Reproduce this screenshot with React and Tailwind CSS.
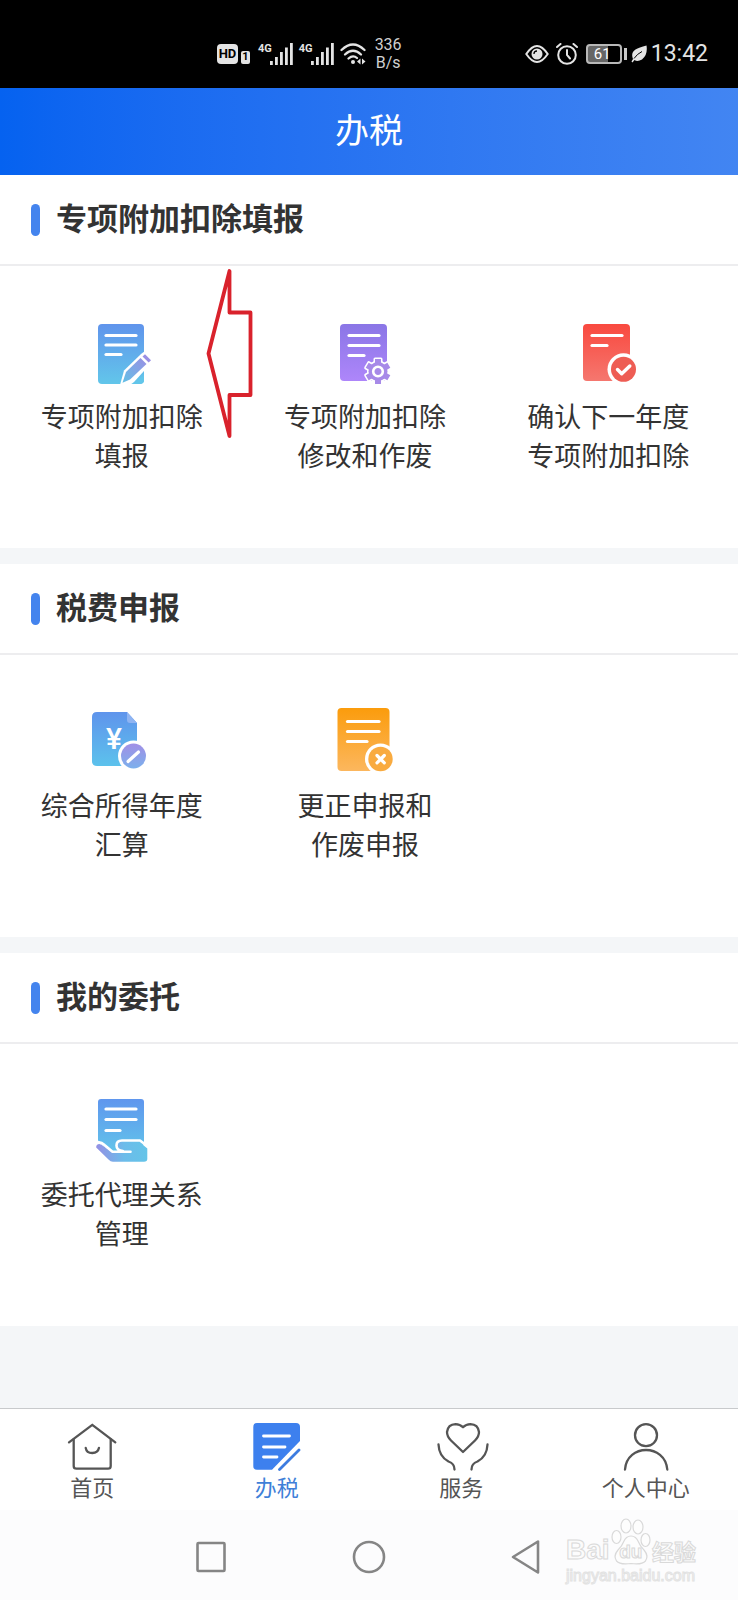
import React, { useState } from 'react';

const DocLines = ({ x = 19, ys, short = 36 }) => (
  <g stroke="#fff" strokeWidth="3.2" strokeLinecap="round">
    {ys.map((y, i) => (
      <line key={y} x1={x + 1} x2={i === ys.length - 1 ? short - 1 : 50} y1={y} y2={y} />
    ))}
  </g>
);

const EditDocIcon = () => (
  <svg viewBox="0 0 72 72" className="h-[72px] w-[72px]" aria-hidden="true">
    <defs>
      <linearGradient id="editDoc" x1="0" y1="0" x2="0" y2="1">
        <stop offset="0" stopColor="#6094ec" />
        <stop offset="1" stopColor="#62c6ea" />
      </linearGradient>
      <linearGradient id="editPen" x1="1" y1="0" x2="0" y2="1">
        <stop offset="0" stopColor="#9a8fe4" />
        <stop offset="1" stopColor="#62c0e6" />
      </linearGradient>
    </defs>
    <rect x="12" y="8" width="46" height="60" rx="4" fill="url(#editDoc)" />
    <DocLines ys={[19.5, 29, 38.5]} />
    <path d="M34 69 L38 54.500 L55 38 L59 35 L68 44 L48 66 L44 69 Z" fill="#fff" />
    <path d="M36.500 66.800 L40 56 L54.500 42 L60.500 48 L44 63.500 Z" fill="url(#editPen)" />
    <path d="M56.500 40.500 L59 38.300 L65 44.200 L62.700 46.600 Z" fill="#9a8fe4" />
    <path d="M48.500 67.800 L58 59 V64 Q58 67.800 54 67.800 Z" fill="#62c6ea" />
  </svg>
);

const GearDocIcon = () => (
  <svg viewBox="0 0 72 72" className="h-[72px] w-[72px]" aria-hidden="true">
    <defs>
      <linearGradient id="gearDoc" x1="0" y1="0" x2="0" y2="1">
        <stop offset="0" stopColor="#8a76e6" />
        <stop offset="1" stopColor="#ae86fa" />
      </linearGradient>
    </defs>
    <rect x="11" y="8" width="47" height="57" rx="4" fill="url(#gearDoc)" />
    <DocLines ys={[19.5, 29.5, 39.5]} />
    <g transform="translate(49 55.5)">
      <g fill="#a78ae8" stroke="#fff" strokeWidth="3" strokeLinejoin="round">
        <circle r="9.5" />
        {[0, 60, 120, 180, 240, 300].map((a) => (
          <rect key={a} x="-3" y="-12.5" width="6" height="6" transform={`rotate(${a})`} />
        ))}
      </g>
      <g fill="#a78ae8">
        <circle r="9.5" />
        {[0, 60, 120, 180, 240, 300].map((a) => (
          <rect key={a} x="-3" y="-12.5" width="6" height="6" transform={`rotate(${a})`} />
        ))}
      </g>
      <circle r="4.8" fill="none" stroke="#fff" strokeWidth="2.6" />
    </g>
  </svg>
);

const CheckDocIcon = () => (
  <svg viewBox="0 0 72 72" className="h-[72px] w-[72px]" aria-hidden="true">
    <defs>
      <linearGradient id="checkDoc" x1="0" y1="0" x2="0" y2="1">
        <stop offset="0" stopColor="#f9493f" />
        <stop offset="1" stopColor="#f5776f" />
      </linearGradient>
    </defs>
    <rect x="11" y="8" width="47" height="57" rx="4" fill="url(#checkDoc)" />
    <DocLines x={19} ys={[19.5, 29.5]} />
    <circle cx="51.5" cy="53.3" r="16" fill="#fff" />
    <circle cx="51.5" cy="53.3" r="12.5" fill="#ee5d54" />
    <path d="M45.5 53.5 L49.7 57.8 L57.8 50" fill="none" stroke="#fff" strokeWidth="3.4" strokeLinecap="round" strokeLinejoin="round" />
  </svg>
);

const YenDocIcon = () => (
  <svg viewBox="0 0 72 72" className="h-[72px] w-[72px]" aria-hidden="true">
    <defs>
      <linearGradient id="yenDoc" x1="0" y1="0" x2="0" y2="1">
        <stop offset="0" stopColor="#5f94ec" />
        <stop offset="1" stopColor="#5cc2ec" />
      </linearGradient>
      <linearGradient id="yenPen" x1="0" y1="0" x2="0" y2="1">
        <stop offset="0" stopColor="#a18fe6" />
        <stop offset="1" stopColor="#7cb0ec" />
      </linearGradient>
    </defs>
    <path d="M11 7 H41 L51 18 V61 H11 Q6 61 6 56 V12 Q6 7 11 7 Z" fill="url(#yenDoc)" />
    <path d="M41 7 L51 18 H44 Q41 18 41 15 Z" fill="#8fb4f2" />
    <text x="28" y="44" textAnchor="middle" fontSize="30" fontWeight="500" fill="#fff" fontFamily="Roboto, sans-serif">¥</text>
    <circle cx="47.5" cy="51" r="15.5" fill="#fff" />
    <circle cx="47.5" cy="51" r="12.5" fill="url(#yenPen)" />
    <path d="M42 56.5 L52.5 47" stroke="#fff" strokeWidth="3.2" strokeLinecap="round" />
  </svg>
);

const CancelDocIcon = () => (
  <svg viewBox="0 0 72 72" className="h-[72px] w-[72px]" aria-hidden="true">
    <defs>
      <linearGradient id="cancelDoc" x1="0" y1="0" x2="0" y2="1">
        <stop offset="0" stopColor="#fb9c0c" />
        <stop offset="1" stopColor="#fcb75e" />
      </linearGradient>
    </defs>
    <rect x="8.5" y="3" width="52" height="63" rx="4" fill="url(#cancelDoc)" />
    <DocLines x={17.5} ys={[16.5, 26.5, 36.5]} short={39} />
    <circle cx="51.5" cy="54" r="15.5" fill="#fff" />
    <circle cx="51.5" cy="54" r="12.2" fill="#f9ab40" />
    <path d="M48 50.5 L55.3 57.8 M55.3 50.5 L48 57.8" stroke="#fff" strokeWidth="3.2" strokeLinecap="round" />
  </svg>
);

const HandDocIcon = () => (
  <svg viewBox="0 0 72 72" className="h-[72px] w-[72px]" aria-hidden="true">
    <defs>
      <linearGradient id="handDoc" x1="0" y1="0" x2="0" y2="1">
        <stop offset="0" stopColor="#5f96ee" />
        <stop offset="1" stopColor="#62c4ea" />
      </linearGradient>
      <linearGradient id="handPalm" x1="0" y1="0" x2="1" y2="0">
        <stop offset="0" stopColor="#9490e4" />
        <stop offset="0.55" stopColor="#6cbcea" />
        <stop offset="1" stopColor="#64c4e8" />
      </linearGradient>
    </defs>
    <path d="M15 5 H55 Q58 5 58 8 V50 L45 58 H26 L12 48 V8 Q12 5 15 5 Z" fill="url(#handDoc)" />
    <DocLines ys={[15, 25.5, 36.5]} short={35} />
    <path
      d="M10.2 53.5 Q10 50 13.5 50 Q16 50.500 18 52.500 L26.500 58.500 H36 Q31 56 31 51.500 Q31 47.500 36 47.500 H53 L61.300 54.500 V65 Q61.300 67.700 58 67.700 H27 Q24.500 67.700 22.500 65.500 Z"
      fill="url(#handPalm)"
    />
    <path
      d="M12 48 Q16 48.5 18.5 51 L26.500 57.800 H44.500 M37 57 Q30.500 56.500 30.500 51.500 Q30.500 46.500 36 46.500 H54 L60 51"
      fill="none"
      stroke="#fff"
      strokeWidth="2.6"
      strokeLinecap="round"
      strokeLinejoin="round"
    />
  </svg>
);

const HomeIcon = () => (
  <svg viewBox="-2 0 56 48" className="h-12 w-14" fill="none" stroke="currentColor" strokeWidth="2.3" strokeLinecap="round" strokeLinejoin="round" aria-hidden="true">
    <path d="M3 19.3 L26.3 1.8 L49.3 19.3" />
    <path d="M7.7 16.5 V43 Q7.7 45.7 10.5 45.7 H42 Q44.7 45.7 44.7 43 V16.5" />
    <path d="M19.7 24.8 Q20.5 30 26.3 30 Q32 30 33 24.8" />
  </svg>
);

const TaxIcon = () => (
  <svg viewBox="-2 0 56 48" className="h-12 w-14" fill="none" strokeLinecap="round" aria-hidden="true">
    <path d="M6 0 H45 Q49 0 49 4 V18 L21 46.8 H6 Q2.3 46.8 2.3 43 V4 Q2.3 0 6 0 Z" fill="#3d80ee" />
    <path d="M48 27 L28.5 46.5" stroke="#3d7ce0" strokeWidth="2.8" />
    <path d="M12.500 13 H38.500 M12.500 24 H34 M12.500 34 H26" stroke="#fff" strokeWidth="2.8" />
  </svg>
);

const ServiceIcon = () => (
  <svg viewBox="-1 0 56 48" className="h-12 w-14 overflow-visible" fill="none" stroke="currentColor" strokeWidth="2.3" strokeLinecap="round" strokeLinejoin="round" aria-hidden="true">
    <path d="M29 29 L17 17.5 Q13 13.5 13 9 Q14 1.5 21.5 1.2 Q26 1.3 29 4.2 Q32 1.3 36.5 1.2 Q44 1.5 45 9 Q45 13.5 41 17.5 Z" />
    <path d="M4.5 21.5 Q5 33.5 14.5 38.500 Q20.5 40.5 20.5 46.5" />
    <path d="M53.5 21.5 Q53 33.5 43.5 38.5 Q37.5 40.5 37.5 46.5" />
  </svg>
);

const PersonIcon = () => (
  <svg viewBox="-2 0 56 48" className="h-12 w-14" fill="none" stroke="currentColor" strokeWidth="2.3" strokeLinecap="round" aria-hidden="true">
    <circle cx="26" cy="12.2" r="11" />
    <path d="M5 46.5 C7 20.5 45 20.5 47.3 46.5" />
  </svg>
);

const sections = [
  {
    title: '专项附加扣除填报',
    items: [
      { lines: ['专项附加扣除', '填报'], Icon: EditDocIcon },
      { lines: ['专项附加扣除', '修改和作废'], Icon: GearDocIcon },
      { lines: ['确认下一年度', '专项附加扣除'], Icon: CheckDocIcon },
    ],
    arrow: true,
  },
  {
    title: '税费申报',
    items: [
      { lines: ['综合所得年度', '汇算'], Icon: YenDocIcon },
      { lines: ['更正申报和', '作废申报'], Icon: CancelDocIcon },
    ],
  },
  {
    title: '我的委托',
    items: [{ lines: ['委托代理关系', '管理'], Icon: HandDocIcon }],
  },
];

const tabs = [
  { id: 'home', label: '首页', Icon: HomeIcon },
  { id: 'tax', label: '办税', Icon: TaxIcon },
  { id: 'service', label: '服务', Icon: ServiceIcon },
  { id: 'me', label: '个人中心', Icon: PersonIcon },
];

const Signal = () => (
  <div className="flex items-start">
    <span className="text-[11px] leading-[11px] font-bold">4G</span>
    <svg viewBox="0 0 23 22" className="-ml-0.5 h-[22px] w-[23px]" fill="currentColor" aria-hidden="true">
      <rect x="0" y="18" width="2.8" height="4" />
      <rect x="5" y="14" width="2.8" height="8" />
      <rect x="10" y="9" width="2.8" height="13" />
      <rect x="15" y="4.5" width="2.8" height="17.5" />
      <rect x="20" y="0" width="2.8" height="22" />
    </svg>
  </div>
);

const StatusBar = () => (
  <div className="flex h-[88px] items-center justify-between bg-black pt-5 pr-[30px] pl-[217px] font-[Roboto,sans-serif] text-[#e4e4e4]">
    <div className="flex items-center">
      <span className="flex h-5 w-[21px] items-center justify-center rounded bg-[#e4e4e4] text-[13px] font-bold text-black">HD</span>
      <span className="mt-1.5 ml-[3px] flex h-[13px] w-[9px] items-center justify-center rounded-xs bg-[#e4e4e4] text-[11px] font-bold text-black">1</span>
      <div className="ml-2 flex gap-1.5">
        <Signal />
        <Signal />
      </div>
      <svg viewBox="0 0 27 22" className="ml-1.5 h-[22px] w-[27px]" fill="none" stroke="currentColor" strokeWidth="2.3" strokeLinecap="round" aria-hidden="true">
        <path d="M1.5 7 Q13 -4 24.5 7" />
        <path d="M5 11.5 Q13 4 21 11.5" />
        <path d="M8.5 15.5 Q13 11.5 17 15" />
        <circle cx="13" cy="19" r="2" fill="currentColor" stroke="none" />
        <path d="M20.5 15.5 V21.5 L17 18.5 Z M22 15.5 V21.5 L25.5 18.5 Z" fill="currentColor" stroke="none" />
      </svg>
      <div className="ml-2 text-center text-[16px] leading-[18px] text-[#d0d0d0]">
        <div>336</div>
        <div>B/s</div>
      </div>
    </div>
    <div className="flex items-center">
      <svg viewBox="0 0 24 20" className="h-5 w-6" fill="none" stroke="currentColor" strokeWidth="2" aria-hidden="true">
        <path d="M1.3 10 Q12 -6 22.7 10 Q12 26 1.3 10 Z" />
        <circle cx="12" cy="10" r="5.5" fill="currentColor" stroke="none" />
        <path d="M9 10 Q9 7 12 7" stroke="#000" strokeWidth="1.3" />
      </svg>
      <svg viewBox="0 0 22 22" className="ml-[7px] h-[22px] w-[22px]" fill="none" stroke="currentColor" strokeWidth="2" strokeLinecap="round" aria-hidden="true">
        <circle cx="11" cy="12" r="8.8" />
        <path d="M11 7 V12 L14 15.5 M1 4 L4.500 1 M21 4 L17.5 1" />
      </svg>
      <div className="ml-2 flex h-5 w-9 items-center rounded border-2 border-[#b8b8b8] bg-linear-to-r from-[#666] from-62% to-black to-62% pl-1.5 text-[15px] leading-4 text-white">
        61
      </div>
      <span className="ml-0.5 h-3 w-[3px] bg-[#c8c8c8]" />
      <svg viewBox="0 0 16 18" className="ml-1 h-[18px] w-4" aria-hidden="true">
        <path d="M15.5 0.5 Q17 10 11 14.5 Q6.5 17 3.5 15 L1.5 17.5 L0.5 16.5 L2 14 Q-0.5 8 4.5 4.5 Q8 2.5 15.5 0.5 Z" fill="currentColor" />
        <path d="M3 13.5 Q6 9 11 6.5" fill="none" stroke="#000" strokeWidth="1" />
      </svg>
      <span className="ml-1 text-[23px] leading-7">13:42</span>
    </div>
  </div>
);

const Section = ({ title, items, arrow }) => (
  <section className="relative bg-white">
    <div className="flex h-[91px] items-center border-b-2 border-[#ededef] pl-[31px]">
      <span className="h-8 w-[9px] rounded-full bg-[#4484ee]" />
      <h2 className="ml-4 pb-1.5 text-[31px] leading-10 font-bold text-[#333]">{title}</h2>
    </div>
    <div className="grid grid-cols-3 pt-[50px] pr-2 pb-[74px]">
      {items.map(({ lines, Icon }) => (
        <button key={lines.join('')} type="button" className="flex cursor-pointer flex-col items-center">
          <Icon />
          <span className="mt-2 text-[27px] leading-[39px] text-[#333]">
            {lines[0]}
            <br />
            {lines[1]}
          </span>
        </button>
      ))}
    </div>
    {arrow && (
      <svg viewBox="0 0 48 172" className="absolute top-[93px] left-[206px] h-[172px] w-12" aria-hidden="true">
        <path d="M23.5 3 V44.5 H44.5 V127 H23.5 V168 L2.5 85.5 Z" fill="none" stroke="#d9222c" strokeWidth="3.8" strokeLinejoin="round" />
      </svg>
    )}
  </section>
);

const Watermark = () => (
  <div className="absolute right-[42px] bottom-3.5 w-[130px] text-[#fbfbfb]">
    <div className="flex items-end justify-between [-webkit-text-stroke:1px_#d9d9d9]">
      <span className="font-['Liberation_Sans'] text-[28px] leading-8 font-bold">Bai</span>
      <div className="relative flex h-12 w-10 items-end justify-center">
        <svg viewBox="0 0 40 48" className="absolute inset-0 h-12 w-10" fill="#fdfdfd" stroke="#d9d9d9" strokeWidth="1.2" aria-hidden="true">
          <ellipse cx="15" cy="8" rx="5" ry="7" />
          <ellipse cx="27" cy="9" rx="5" ry="7" />
          <ellipse cx="5.5" cy="19" rx="4.5" ry="6.5" />
          <ellipse cx="34.5" cy="22" rx="4.5" ry="6.5" />
          <path d="M20 18 Q25 18 27.5 24 Q29 28 33 32 Q38 38 34.5 43 Q31 47 20 45.5 Q9 47 5.5 43 Q2 38 7 32 Q11 28 12.5 24 Q15 18 20 18 Z" />
        </svg>
        <span className="relative pb-1 font-['Liberation_Sans'] text-[19px] leading-5 font-bold">du</span>
      </div>
      <span className="text-[22px] leading-8 font-bold">经验</span>
    </div>
    <div className="font-['Liberation_Sans'] text-[16px] leading-5 [-webkit-text-stroke:1px_#e2e2e2]">jingyan.baidu.com</div>
  </div>
);

const App = () => {
  const [active, setActive] = useState('tax');

  return (
    <div className="flex min-h-screen flex-col bg-[#f4f6f8] font-['Noto_Sans_CJK_SC',sans-serif]">
      <StatusBar />
      <header className="flex h-[87px] items-center justify-center bg-linear-to-r from-[#0562f0] to-[#4285f2] pb-1.5">
        <h1 className="text-[34px] leading-10 text-white">办税</h1>
      </header>

      <main className="flex flex-1 flex-col gap-4">
        {sections.map((section) => (
          <Section key={section.title} {...section} />
        ))}
      </main>

      <nav className="grid grid-cols-4 border-t border-[#c8cacc] bg-white pt-3.5 pb-2">
        {tabs.map(({ id, label, Icon }) => (
          <button
            key={id}
            type="button"
            onClick={() => setActive(id)}
            className={`flex cursor-pointer flex-col items-center ${active === id ? 'text-[#3f7fd8]' : 'text-[#555]'}`}
          >
            <Icon />
            <span className="text-[22px] leading-[31px]">{label}</span>
          </button>
        ))}
      </nav>

      <div className="relative flex h-[90px] items-center justify-center gap-[94px] bg-[#fcfcfd] pt-1 text-[#858585]">
        <button type="button" aria-label="最近任务" className="flex w-16 justify-center">
          <svg viewBox="0 0 36 36" className="h-9 w-9" fill="none" stroke="currentColor" strokeWidth="2.6" strokeLinejoin="round" aria-hidden="true">
            <rect x="4.5" y="4" width="27" height="28" rx="1" />
          </svg>
        </button>
        <button type="button" aria-label="主屏幕" className="flex w-16 justify-center">
          <svg viewBox="0 0 36 36" className="h-9 w-9" fill="none" stroke="currentColor" strokeWidth="2.6" aria-hidden="true">
            <circle cx="18" cy="18" r="15" />
          </svg>
        </button>
        <button type="button" aria-label="返回" className="flex w-16 justify-center">
          <svg viewBox="0 0 36 36" className="h-9 w-9" fill="none" stroke="currentColor" strokeWidth="2.6" strokeLinejoin="round" aria-hidden="true">
            <path d="M29 2.5 V33.5 L4 18 Z" />
          </svg>
        </button>
        <Watermark />
      </div>
    </div>
  );
};

export default App;
